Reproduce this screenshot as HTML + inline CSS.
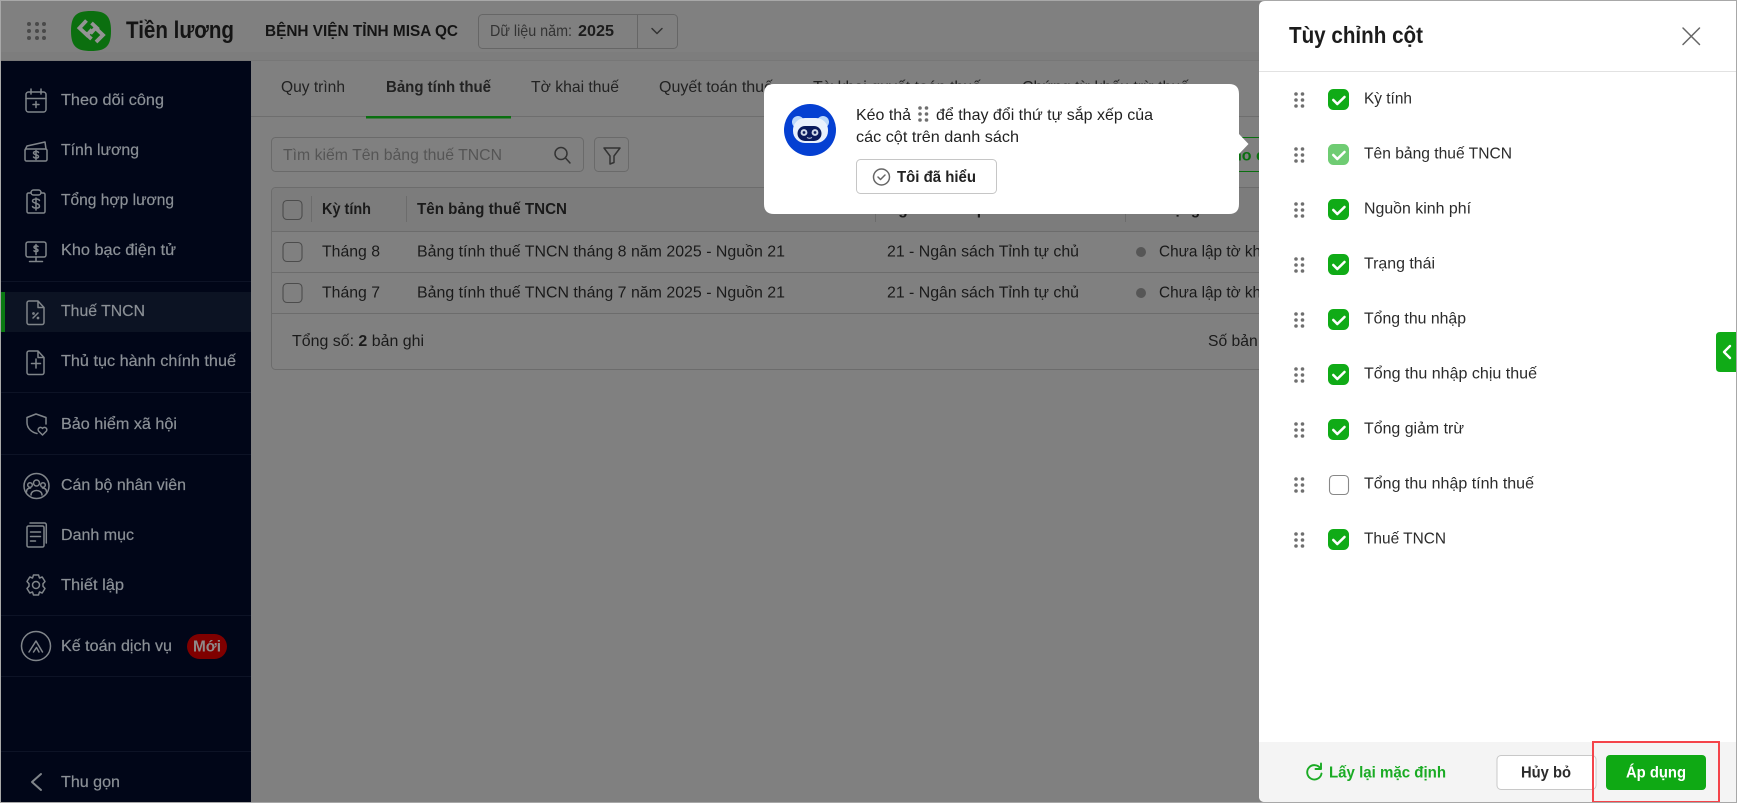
<!DOCTYPE html>
<html lang="vi">
<head>
<meta charset="utf-8">
<title>Tiền lương</title>
<style>
html,body{margin:0;padding:0;width:1737px;height:803px;overflow:hidden;background:#808080}
svg{display:block}
text{font-family:"Liberation Sans",Arial,sans-serif;white-space:pre}
.side{font-size:16px;fill:#8b9096;stroke:#8b9096;stroke-width:.2}
.dark{font-size:16px;fill:#1a1a1a}
.tab{font-size:16px;fill:#222}
.b{font-weight:bold}
.lab{font-size:16px;fill:#2b2b2b}
.ic{fill:none;stroke:#80858a;stroke-width:1.5;stroke-linecap:round;stroke-linejoin:round}
.g{fill:none;stroke:#666;stroke-width:1.5;stroke-linecap:round;stroke-linejoin:round}
</style>
</head>
<body>
<svg xmlns="http://www.w3.org/2000/svg" width="1737" height="803" viewBox="0 0 1737 803">
<defs>
<g id="drag" fill="#6f6f6f"><circle cx="2" cy="2" r="1.8"/><circle cx="8.5" cy="2" r="1.8"/><circle cx="2" cy="8" r="1.8"/><circle cx="8.5" cy="8" r="1.8"/><circle cx="2" cy="14" r="1.8"/><circle cx="8.5" cy="14" r="1.8"/></g>
<g id="chk"><rect width="21" height="21" rx="5.5" fill="#10ab17"/><path d="M5.3 11l4 4 7.2-7" fill="none" stroke="#fff" stroke-width="2.6" stroke-linecap="round" stroke-linejoin="round"/></g>
</defs>

<!-- page bg -->
<rect width="1737" height="803" fill="#808080"/>
<rect x="0" y="52" width="1260" height="12" fill="#7a7a7a" opacity=".5"/>
<rect x="0" y="60" width="1260" height="3" fill="#777"/>
<rect x="251" y="61" width="1010" height="742" fill="#808080"/>

<!-- header -->
<g fill="#4a4a4a">
<circle cx="29" cy="24" r="2"/><circle cx="37" cy="24" r="2"/><circle cx="44" cy="24" r="2"/>
<circle cx="29" cy="31" r="2"/><circle cx="37" cy="31" r="2"/><circle cx="44" cy="31" r="2"/>
<circle cx="29" cy="38" r="2"/><circle cx="37" cy="38" r="2"/><circle cx="44" cy="38" r="2"/>
</g>
<path d="M91 11c14 0 20 4 20 20s-6 20-20 20-20-4-20-20 6-20 20-20z" fill="#0b6f0f"/>
<g fill="none" stroke="#949494" stroke-width="3.800" stroke-linejoin="miter">
<path d="M86.500 20.500L79.500 28l7.500 7 5-5.500"/>
<path d="M96 42l7-7-7.500-7-5 5.500"/>
<path d="M91.500 23l7 6.500"/>
<path d="M91 39.500l-6.500-6.500" opacity="0"/>
<path d="M91.500 39l-6.500-6"/>
</g>
<text x="126" y="38" font-size="24" class="b" fill="#141414" textLength="108" lengthAdjust="spacingAndGlyphs">Tiền lương</text>
<text x="265" y="36" font-size="16" class="b" fill="#141414" textLength="193" lengthAdjust="spacingAndGlyphs">BỆNH VIỆN TỈNH MISA QC</text>
<rect x="478.5" y="14.5" width="199" height="34" rx="4" fill="#808080" stroke="#666"/>
<line x1="637.5" y1="15" x2="637.5" y2="48" stroke="#666"/>
<text x="490" y="36" font-size="16" fill="#333" textLength="82" lengthAdjust="spacingAndGlyphs">Dữ liệu năm:</text>
<text x="578" y="36" font-size="16" class="b" fill="#1c1c1c" textLength="36" lengthAdjust="spacingAndGlyphs">2025</text>
<path d="M652 28.5l5 5 5-5" fill="none" stroke="#333" stroke-width="1.5" stroke-linecap="round" stroke-linejoin="round"/>

<!-- sidebar -->
<rect x="1" y="61" width="250" height="741" fill="#010618"/>
<rect x="1" y="292" width="250" height="40" fill="#0c1323"/>
<rect x="1" y="292" width="4" height="40" fill="#0a7a12"/>
<g stroke="#0d1326">
<line x1="1" x2="251" y1="281.5" y2="281.5"/><line x1="1" x2="251" y1="392.5" y2="392.5"/>
<line x1="1" x2="251" y1="454.5" y2="454.5"/><line x1="1" x2="251" y1="615.5" y2="615.5"/>
<line x1="1" x2="251" y1="676.5" y2="676.5"/><line x1="1" x2="251" y1="751.5" y2="751.5"/>
</g>
<g class="side">
<text x="61" y="105" textLength="103" lengthAdjust="spacingAndGlyphs">Theo dõi công</text>
<text x="61" y="155" textLength="78" lengthAdjust="spacingAndGlyphs">Tính lương</text>
<text x="61" y="205" textLength="113" lengthAdjust="spacingAndGlyphs">Tổng hợp lương</text>
<text x="61" y="255" textLength="115" lengthAdjust="spacingAndGlyphs">Kho bạc điện tử</text>
<text x="61" y="316" textLength="84" lengthAdjust="spacingAndGlyphs">Thuế TNCN</text>
<text x="61" y="366" textLength="175" lengthAdjust="spacingAndGlyphs">Thủ tục hành chính thuế</text>
<text x="61" y="429" textLength="116" lengthAdjust="spacingAndGlyphs">Bảo hiểm xã hội</text>
<text x="61" y="490" textLength="125" lengthAdjust="spacingAndGlyphs">Cán bộ nhân viên</text>
<text x="61" y="540" textLength="73" lengthAdjust="spacingAndGlyphs">Danh mục</text>
<text x="61" y="590" textLength="63" lengthAdjust="spacingAndGlyphs">Thiết lập</text>
<text x="61" y="651" textLength="111" lengthAdjust="spacingAndGlyphs">Kế toán dịch vụ</text>
<text x="61" y="787" textLength="59" lengthAdjust="spacingAndGlyphs">Thu gọn</text>
</g>
<rect x="187" y="634" width="40" height="25" rx="12.5" fill="#7f0000"/>
<text x="193" y="651.5" font-size="16" class="b" fill="#8f8a8a" textLength="28" lengthAdjust="spacingAndGlyphs">Mới</text>

<!-- sidebar icons -->
<g class="ic">
<!-- calendar -->
<rect x="26" y="92" width="20" height="20" rx="2.5"/><path d="M26 98.5h20M31 89v5M41 89v5M36 101.500v6M33 104.500h6"/>
<!-- wallet -->
<rect x="25" y="149" width="22" height="12" rx="1.5"/>
<path d="M25 150l2-4 18-4 1 7"/><path d="M36 150.500v9M38.500 152.500c-1-1.500-5-1.500-5 .5s5 1.500 5 3.500-4 2-5 .5"/>
<!-- clipboard -->
<path d="M31 193h-2.500a1.500 1.500 0 0 0-1.500 1.500v17a1.500 1.500 0 0 0 1.500 1.500h15a1.500 1.500 0 0 0 1.500-1.500v-17a1.500 1.500 0 0 0-1.500-1.500H41"/>
<rect x="31" y="190" width="10" height="5" rx="2.500"/>
<path d="M36 198v12M39.500 200.500c-1-2-7-2-7 .5s7 2 7 5-6 2.500-7 .5"/>
<!-- monitor -->
<rect x="26" y="242" width="20" height="15" rx="2"/><path d="M36 257v4M29.500 261.500h13M36 244.500v10M38 246.500c-1-1-4-1-4 .8s4 1.200 4 3-3 1.500-4 .5"/>
<!-- doc percent -->
<path d="M29 301h9l6 6.500v15a2 2 0 0 1-2 2H29a2 2 0 0 1-2-2v-19.500a2 2 0 0 1 2-2zM38 301v6.500h6"/><path d="M33 318l5-5"/><circle cx="33.500" cy="313.500" r=".6"/><circle cx="38" cy="318" r=".6"/>
<!-- doc plus -->
<path d="M29 351h9l6 6.500v15a2 2 0 0 1-2 2H29a2 2 0 0 1-2-2v-19.500a2 2 0 0 1 2-2zM38 351v6.500h6"/><path d="M36 359v9M31.500 363.500h9"/>
<!-- shield -->
<path d="M36 414l10 3.500v6.500M37 433.500c-5-1-10-5-10-11v-5l9-3.500"/>
<path d="M42.500 435l-4-4a2.300 2.300 0 0 1 4-2.500 2.300 2.300 0 0 1 4 2.500z"/>
<!-- people -->
<circle cx="36.500" cy="486" r="12.500"/><circle cx="36.500" cy="483" r="3"/><circle cx="30" cy="485" r="2.300"/><circle cx="43" cy="485" r="2.300"/>
<path d="M31 495c0-6 11-6 11 0M26.500 492c0-3 2-4 4-4M46.500 492c0-3-2-4-4-4"/>
<!-- docs -->
<rect x="27" y="526" width="17" height="21" rx="1.500"/><path d="M30 523h14.500a1.800 1.800 0 0 1 1.800 1.800V543M30.500 532h10M30.500 536.500h10M30.500 541h5"/>
<!-- gear -->
<circle cx="36" cy="585" r="3.500"/>
<path d="M33.500 575l5 0 1 3 2.700-1 2.800 4.500-2 2.300v2.400l2 2.300-2.800 4.500-2.700-1-1 3h-5l-1-3-2.700 1-2.800-4.500 2-2.300v-2.400l-2-2.300 2.800-4.500 2.700 1z"/>
<!-- ke toan -->
<circle cx="36" cy="646" r="14.500"/><path d="M29 652l7-11 6.500 11M33.500 652l3-4.500 2.500 4.500"/>
<!-- collapse -->
<path d="M41 774l-9 8 9 8" stroke-width="2"/>
</g>

<!-- tabs -->
<line x1="251" x2="1260" y1="116.500" y2="116.500" stroke="#6e6e6e"/>
<rect x="366" y="116" width="145" height="2.500" fill="#0a6f10"/>
<text class="tab" x="281" y="92" textLength="64" lengthAdjust="spacingAndGlyphs">Quy trình</text>
<text class="tab b" x="386" y="92" textLength="105" lengthAdjust="spacingAndGlyphs">Bảng tính thuế</text>
<text class="tab" x="531" y="92" textLength="88" lengthAdjust="spacingAndGlyphs">Tờ khai thuế</text>
<text class="tab" x="659" y="92" textLength="114" lengthAdjust="spacingAndGlyphs">Quyết toán thuế</text>
<text class="tab" x="813" y="92" textLength="168" lengthAdjust="spacingAndGlyphs">Tờ khai quyết toán thuế</text>
<text class="tab" x="1022" y="92" textLength="167" lengthAdjust="spacingAndGlyphs">Chứng từ khấu trừ thuế</text>

<!-- search -->
<rect x="271.500" y="137.500" width="312" height="34" rx="4" fill="#808080" stroke="#6a6a6a"/>
<text x="283" y="160" font-size="16" fill="#555" textLength="219" lengthAdjust="spacingAndGlyphs">Tìm kiếm Tên bảng thuế TNCN</text>
<circle cx="561" cy="153.500" r="6" fill="none" stroke="#333" stroke-width="1.500"/><path d="M565.500 158l4.500 5" stroke="#333" stroke-width="1.500" stroke-linecap="round"/>
<rect x="594.500" y="137.500" width="34" height="34" rx="4" fill="#808080" stroke="#6a6a6a"/>
<path d="M604 148h16l-6 8v6.500l-4 1.500v-8z" fill="none" stroke="#333" stroke-width="1.500" stroke-linejoin="round"/>

<!-- green btn partial -->
<rect x="1180" y="137.500" width="120" height="34" fill="none" stroke="#0a6f10"/>
<text x="1232" y="160.500" font-size="16" class="b" fill="#0a6f10">ho c</text>

<!-- table -->
<rect x="271.500" y="187.500" width="1020" height="182" rx="4" fill="#808080" stroke="#6c6c6c"/>
<path d="M272 231V192q0-4 4-4h1010v43z" fill="#7c7c7c"/>
<g stroke="#6c6c6c">
<line x1="272" x2="1260" y1="231.500" y2="231.500"/>
<line x1="272" x2="1260" y1="272.500" y2="272.500"/>
<line x1="272" x2="1260" y1="313.500" y2="313.500"/>
<line x1="311.500" x2="311.500" y1="196" y2="222"/>
<line x1="406.500" x2="406.500" y1="196" y2="222"/>
<line x1="875.500" x2="875.500" y1="196" y2="222"/>
<line x1="1125.500" x2="1125.500" y1="196" y2="222"/>
</g>
<g fill="none" stroke="#4c4c4c" stroke-width="1.100">
<rect x="283" y="200.500" width="19" height="19" rx="4"/>
<rect x="283" y="242.500" width="19" height="19" rx="4"/>
<rect x="283" y="283.500" width="19" height="19" rx="4"/>
</g>
<g class="dark">
<text class="b" x="322" y="214" textLength="49" lengthAdjust="spacingAndGlyphs">Kỳ tính</text>
<text class="b" x="417" y="214" textLength="150" lengthAdjust="spacingAndGlyphs">Tên bảng thuế TNCN</text>
<text class="b" x="887" y="214" textLength="113" lengthAdjust="spacingAndGlyphs">Nguồn kinh phí</text>
<text class="b" x="1159" y="214" textLength="72" lengthAdjust="spacingAndGlyphs">Trạng thái</text>
<text x="322" y="256.500" textLength="58" lengthAdjust="spacingAndGlyphs">Tháng 8</text>
<text x="322" y="297.500" textLength="58" lengthAdjust="spacingAndGlyphs">Tháng 7</text>
<text x="417" y="256.500" textLength="368" lengthAdjust="spacingAndGlyphs">Bảng tính thuế TNCN tháng 8 năm 2025 - Nguồn 21</text>
<text x="417" y="297.500" textLength="368" lengthAdjust="spacingAndGlyphs">Bảng tính thuế TNCN tháng 7 năm 2025 - Nguồn 21</text>
<text x="887" y="256.500" textLength="192" lengthAdjust="spacingAndGlyphs">21 - Ngân sách Tỉnh tự chủ</text>
<text x="887" y="297.500" textLength="192" lengthAdjust="spacingAndGlyphs">21 - Ngân sách Tỉnh tự chủ</text>
<text x="1159" y="256.500" textLength="114" lengthAdjust="spacingAndGlyphs">Chưa lập tờ khai</text>
<text x="1159" y="297.500" textLength="114" lengthAdjust="spacingAndGlyphs">Chưa lập tờ khai</text>
<text x="292" y="346" textLength="132" lengthAdjust="spacingAndGlyphs">Tổng số: <tspan class="b">2</tspan> bản ghi</text>
<text x="1208" y="346" textLength="75" lengthAdjust="spacingAndGlyphs">Số bản ghi</text>
</g>
<circle cx="1141" cy="252" r="5" fill="#565656"/>
<circle cx="1141" cy="293" r="5" fill="#565656"/>

<!-- tooltip -->
<path d="M774 84h455q10 0 10 10v40l9.500 10-9.500 10v50q0 10-10 10H774q-10 0-10-10V94q0-10 10-10z" fill="#fff"/>
<circle cx="810" cy="130" r="26" fill="#0540d2"/>
<circle cx="798" cy="122" r="6" fill="#bcd8fa"/><circle cx="823" cy="122" r="6" fill="#bcd8fa"/>
<rect x="793" y="118" width="35" height="25" rx="12" fill="#eaf1fc"/>
<rect x="797.500" y="126" width="24" height="15" rx="7.500" fill="#0a1a5c"/>
<circle cx="804" cy="132.500" r="3.400" fill="#cfd8e8"/><circle cx="815" cy="132.500" r="3.400" fill="#cfd8e8"/>
<circle cx="804" cy="132.500" r="1.400" fill="#0a1a5c"/><circle cx="815" cy="132.500" r="1.400" fill="#0a1a5c"/>
<path d="M807 137.500q2.500 1.500 5 0" fill="none" stroke="#cfd8e8"/>
<text x="856" y="120" font-size="16" fill="#222" textLength="55" lengthAdjust="spacingAndGlyphs">Kéo thả</text>
<use href="#drag" x="918" y="106"/>
<text x="936" y="120" font-size="16" fill="#222" textLength="217" lengthAdjust="spacingAndGlyphs">để thay đổi thứ tự sắp xếp của</text>
<text x="856" y="142" font-size="16" fill="#222" textLength="163" lengthAdjust="spacingAndGlyphs">các cột trên danh sách</text>
<rect x="856.500" y="159.500" width="140" height="34" rx="4" fill="#fff" stroke="#c6c6c6"/>
<circle cx="881.500" cy="177" r="8" fill="none" stroke="#666" stroke-width="1.500"/><path d="M878 177l2.500 2.500 4.500-4.500" fill="none" stroke="#666" stroke-width="1.500" stroke-linecap="round" stroke-linejoin="round"/>
<text x="897" y="182" font-size="16" class="b" fill="#222" textLength="79" lengthAdjust="spacingAndGlyphs">Tôi đã hiểu</text>

<!-- panel -->
<path d="M1265 1h471v801h-471q-6 0-6-6V7q0-6 6-6z" fill="#fff"/>
<text x="1289" y="43" font-size="23" class="b" fill="#1c1c1c" textLength="134" lengthAdjust="spacingAndGlyphs">Tùy chỉnh cột</text>
<path d="M1683 28l16.500 16.500M1699.500 28L1683 44.500" stroke="#666" stroke-width="1.500" stroke-linecap="round"/>
<line x1="1259" x2="1736" y1="71.500" y2="71.500" stroke="#e2e2e2"/>

<use href="#drag" x="1294" y="92"/><use href="#chk" x="1328" y="89"/>
<text class="lab" x="1364" y="103.500" textLength="48" lengthAdjust="spacingAndGlyphs">Kỳ tính</text>
<use href="#drag" x="1294" y="147"/><use href="#chk" x="1328" y="144" opacity=".6"/>
<text class="lab" x="1364" y="158.500" textLength="148" lengthAdjust="spacingAndGlyphs">Tên bảng thuế TNCN</text>
<use href="#drag" x="1294" y="202"/><use href="#chk" x="1328" y="199"/>
<text class="lab" x="1364" y="213.500" textLength="107" lengthAdjust="spacingAndGlyphs">Nguồn kinh phí</text>
<use href="#drag" x="1294" y="257"/><use href="#chk" x="1328" y="254"/>
<text class="lab" x="1364" y="268.500" textLength="71" lengthAdjust="spacingAndGlyphs">Trạng thái</text>
<use href="#drag" x="1294" y="312"/><use href="#chk" x="1328" y="309"/>
<text class="lab" x="1364" y="323.500" textLength="102" lengthAdjust="spacingAndGlyphs">Tổng thu nhập</text>
<use href="#drag" x="1294" y="367"/><use href="#chk" x="1328" y="364"/>
<text class="lab" x="1364" y="378.500" textLength="173" lengthAdjust="spacingAndGlyphs">Tổng thu nhập chịu thuế</text>
<use href="#drag" x="1294" y="422"/><use href="#chk" x="1328" y="419"/>
<text class="lab" x="1364" y="433.500" textLength="100" lengthAdjust="spacingAndGlyphs">Tổng giảm trừ</text>
<use href="#drag" x="1294" y="477"/>
<rect x="1329.500" y="475.500" width="19" height="19" rx="4" fill="#fff" stroke="#888" stroke-width="1.100"/>
<text class="lab" x="1364" y="488.500" textLength="170" lengthAdjust="spacingAndGlyphs">Tổng thu nhập tính thuế</text>
<use href="#drag" x="1294" y="532"/><use href="#chk" x="1328" y="529"/>
<text class="lab" x="1364" y="543.500" textLength="82" lengthAdjust="spacingAndGlyphs">Thuế TNCN</text>

<!-- green handle -->
<path d="M1736 332v40h-16q-4 0-4-4v-32q0-4 4-4z" fill="#10ab17"/>
<path d="M1730 346l-6 6 6 6" fill="none" stroke="#fff" stroke-width="2.400" stroke-linecap="round" stroke-linejoin="round"/>

<!-- footer -->
<path d="M1259 742h477v60h-471q-6 0-6-6z" fill="#f4f4f4"/>
<path d="M1320.500 768.500a7.200 7.200 0 1 0 1 5" fill="none" stroke="#1aab24" stroke-width="1.900" stroke-linecap="round"/>
<path d="M1321 763.500v5.500h-5.500" fill="none" stroke="#1aab24" stroke-width="1.900" stroke-linecap="round" stroke-linejoin="round"/>
<text x="1329" y="777.500" font-size="16" class="b" fill="#1aab24" textLength="117" lengthAdjust="spacingAndGlyphs">Lấy lại mặc định</text>
<rect x="1497" y="755.500" width="99" height="34" rx="4" fill="#fff" stroke="#c8c8c8"/>
<text x="1521" y="777.500" font-size="16" class="b" fill="#2b2b2b" textLength="50" lengthAdjust="spacingAndGlyphs">Hủy bỏ</text>
<rect x="1606" y="755" width="100" height="35" rx="4" fill="#0fa914"/>
<text x="1626" y="777.500" font-size="16" class="b" fill="#fff" textLength="60" lengthAdjust="spacingAndGlyphs">Áp dụng</text>
<rect x="1593" y="742" width="126" height="60" fill="none" stroke="#f4444a" stroke-width="2"/>

<!-- outer frame -->
<rect x=".5" y=".5" width="1736" height="802" fill="none" stroke="#a8a8a8"/>
</svg>
</body>
</html>
